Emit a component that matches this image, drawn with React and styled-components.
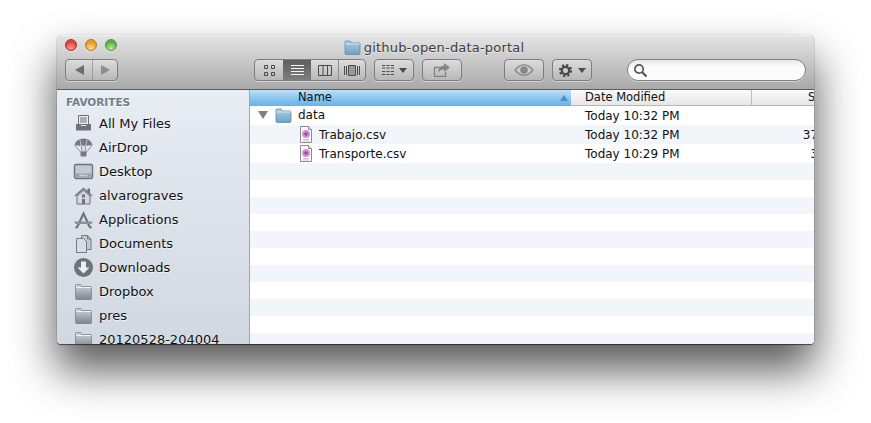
import React from "react";
import styled, { createGlobalStyle } from "styled-components";

const Global = createGlobalStyle`
  html, body {
    margin: 0;
    padding: 0;
    background: #fff;
    overflow: hidden;
  }
  body {
    font-family: "DejaVu Sans", "Liberation Sans", sans-serif;
    font-size: 12px;
    color: #111;
  }
`;

const Page = styled.div`
  width: 871px;
  height: 423px;
  padding: 35px 0 0 57px;
  box-sizing: border-box;
`;

const Win = styled.div`
  width: 757px;
  height: 309px;
  display: flex;
  flex-direction: column;
  border-radius: 5px 5px 4px 4px;
  overflow: hidden;
  box-shadow: 0 25px 44px 1px rgba(0, 0, 0, 0.66), 0 1px 1px rgba(0, 0, 0, 0.55),
    0 0 1px rgba(0, 0, 0, 0.5);
`;

const Chrome = styled.div`
  height: 55px;
  flex: none;
  box-sizing: border-box;
  background: linear-gradient(#e4e4e4, #d2d2d2 30%, #a9a9a9);
  border-top: 1px solid #f0f0f0;
  border-bottom: 1px solid #5c5c5c;
  display: flex;
  flex-direction: column;
`;

const TitleBar = styled.div`
  height: 23px;
  flex: none;
  display: flex;
  align-items: center;
  position: relative;
  justify-content: center;
  gap: 3px;
  padding-right: 3px;
  font-size: 13px;
  color: #3c3c3c;
  letter-spacing: 0.2px;
  text-shadow: 0 1px 0 rgba(255, 255, 255, 0.55);
`;

const Lights = styled.div`
  position: absolute;
  left: 8px;
  top: 3px;
  display: flex;
  gap: 8px;
`;

const Light = styled.span`
  width: 12px;
  height: 12px;
  border-radius: 50%;
  border: 1px solid ${(p) => p.$edge};
  box-sizing: border-box;
  background: radial-gradient(circle at 50% 85%, ${(p) => p.$glow}, ${(p) => p.$color} 65%);
  box-shadow: 0 1px 0 rgba(255, 255, 255, 0.4);
`;

const Toolbar = styled.div`
  display: flex;
  align-items: flex-start;
  padding-left: 8px;
`;

const Group = styled.div`
  display: flex;
  height: 22px;
  box-sizing: border-box;
  margin-left: ${(p) => p.$gap || 0}px;
  border: 1px solid #7e7e7e;
  border-radius: 4px;
  overflow: hidden;
  background: linear-gradient(#dcdcdc, #b8b8b8);
  box-shadow: 0 1px 0 rgba(255, 255, 255, 0.45);
`;

const Btn = styled.div`
  width: ${(p) => p.$w}px;
  flex: none;
  display: flex;
  align-items: center;
  justify-content: center;
  gap: 5px;
  box-sizing: border-box;
  border-left: ${(p) => (p.$first ? "none" : "1px solid #8e8e8e")};
  background: ${(p) => (p.$on ? "linear-gradient(#5e5e5e, #7e7e7e)" : "none")};
  opacity: ${(p) => (p.$dim ? 0.72 : 1)};
`;

const Search = styled.div`
  margin-left: 35px;
  width: 179px;
  height: 22px;
  box-sizing: border-box;
  border: 1px solid #808080;
  border-radius: 11px;
  background: linear-gradient(#e8e8e8, #fbfbfb 35%, #fdfdfd);
  box-shadow: 0 1px 0 rgba(255, 255, 255, 0.45);
  display: flex;
  align-items: center;
  padding-left: 5px;
`;

const Body = styled.div`
  flex: 1;
  min-height: 0;
  display: flex;
`;

const Sidebar = styled.div`
  width: 192px;
  flex: none;
  box-sizing: border-box;
  overflow: hidden;
  background: linear-gradient(#e8ecf3, #d0d8e1);
  padding-left: 9px;
`;

const SideHead = styled.div`
  height: 21px;
  padding-top: 2px;
  box-sizing: border-box;
  display: flex;
  align-items: center;
  font-size: 10.5px;
  font-weight: bold;
  color: #6f7e8e;
  text-shadow: 0 1px 0 #fff;
`;

const SideRow = styled.div`
  height: 24px;
  display: flex;
  align-items: center;
  gap: 5px;
  padding-left: 7px;
  font-size: 13px;
  color: #111;
  text-shadow: 0 1px 0 rgba(255, 255, 255, 0.7);
  white-space: nowrap;
`;

const SideIcon = styled.svg`
  width: 21px;
  height: 21px;
  flex: none;
`;

const Divider = styled.div`
  width: 1px;
  flex: none;
  background: #a4a4a4;
`;

const Main = styled.div`
  flex: 1;
  min-width: 0;
  overflow: hidden;
  background: #fff;
`;

const columns = "321px 181px 86px";

const Head = styled.div`
  height: 16px;
  display: grid;
  grid-template-columns: ${columns};
  font-size: 11.5px;
  line-height: 15px;
`;

const HeadCell = styled.div`
  box-sizing: border-box;
  position: relative;
  padding-left: ${(p) => p.$pad}px;
  background: ${(p) =>
    p.$sorted
      ? "linear-gradient(#bfe0f7, #8fc8f0 50%, #6db3ea)"
      : "linear-gradient(#fbfbfb, #e6e6e6)"};
  border-bottom: 1px solid ${(p) => (p.$sorted ? "#78aedb" : "#b8b8b8")};
  border-right: ${(p) => (p.$line ? "1px solid #bdbdbd" : "none")};
  white-space: nowrap;
`;

const SortMark = styled.span`
  position: absolute;
  right: 3px;
  top: 5px;
  width: 0;
  height: 0;
  border-left: 4px solid transparent;
  border-right: 4px solid transparent;
  border-bottom: 6px solid #4c8fc6;
`;

const Row = styled.div`
  height: ${(p) => p.$h}px;
  display: grid;
  grid-template-columns: ${columns};
  align-items: center;
  background: ${(p) => (p.$alt ? "#f2f5fa" : "#fff")};
  white-space: nowrap;
`;

const NameCell = styled.div`
  display: flex;
  align-items: center;
  padding-left: ${(p) => p.$indent}px;
`;

const DateCell = styled.div`
  padding-left: 14px;
`;

const SizeCell = styled.div`
  text-align: right;
`;

const Triangle = styled.span`
  width: 0;
  height: 0;
  margin-right: 7px;
  border-left: 5px solid transparent;
  border-right: 5px solid transparent;
  border-top: 8px solid #808080;
`;

const RowIcon = styled.svg`
  flex: none;
  margin-right: ${(p) => p.$gap}px;
`;

const ic = "#4a4a4a";

const FolderBlue = ({ size = 17, gap = 6 }) => (
  <RowIcon $gap={gap} width={size} height={size * 0.88} viewBox="0 0 17 15">
    <defs>
      <linearGradient id="fb" x1="0" y1="0" x2="0" y2="1">
        <stop offset="0" stopColor="#a9cfe6" />
        <stop offset="1" stopColor="#6ea2c4" />
      </linearGradient>
    </defs>
    <path d="M1 3.5V2a1 1 0 0 1 1-1h4l1.5 2H15a1 1 0 0 1 1 1v9.5a1 1 0 0 1-1 1H2a1 1 0 0 1-1-1z" fill="url(#fb)" stroke="#5f8ba8" strokeWidth="0.8" />
    <path d="M1.5 4h14" stroke="#d5e8f4" strokeWidth="1" />
  </RowIcon>
);

const CsvFile = () => (
  <RowIcon $gap={7} width="12" height="17" viewBox="0 0 12 17">
    <path d="M.5.5h8l3 3v13H.5z" fill="#fff" stroke="#8c8c8c" />
    <path d="M8.5.5v3h3" fill="#e4e4e4" stroke="#8c8c8c" />
    <circle cx="6" cy="8" r="4" fill="#d88ad8" />
    <circle cx="6" cy="8" r="1.8" fill="#a8429f" />
    <path d="M3 13.5h6M3 15h6" stroke="#c4c4c4" />
  </RowIcon>
);

const Tray = () => (
  <SideIcon viewBox="0 0 21 21">
    <path d="M5.5 2.5h10v9h-10z" fill="#eef0f3" stroke="#6b7179" />
    <path d="M7 5h7M7 7h7M7 9h7" stroke="#6b7179" />
    <path d="M3 11h4l1 2h5l1-2h4v6.5H3z" fill="#6d737b" />
  </SideIcon>
);

const Chute = () => (
  <SideIcon viewBox="0 0 21 21">
    <path d="M1.500 9C1.500 4.500 6 1.500 10.500 1.500S19.500 4.500 19.500 9c-1.500-1-3.500-1-5 0-1.200-1-2.800-1-4 0-1.200-1-2.800-1-4 0-1.500-1-3.500-1-5 0z" fill="#737a83" />
    <path d="M7 2.500l1 6.500M14 2.500l-1 6.500" stroke="#c6ccd4" strokeWidth="0.8" fill="none" />
    <path d="M2.500 9l5.500 6.500M18.500 9L13 15.500M8.500 9l.5 6M12.500 9l-.5 6" stroke="#737a83" strokeWidth="0.8" fill="none" />
    <rect x="7.500" y="14.500" width="6" height="5" rx="1" fill="#737a83" />
  </SideIcon>
);

const Screen = () => (
  <SideIcon viewBox="0 0 21 21">
    <rect x="1.500" y="3.500" width="18" height="14" rx="1.500" fill="#c3c9d1" stroke="#6d737b" strokeWidth="1.400" />
    <path d="M2.500 12.500h16v4h-16z" fill="#9aa1aa" />
    <path d="M6.500 14.500h8" stroke="#eef0f3" strokeWidth="1.500" strokeDasharray="1.200 .7" />
  </SideIcon>
);

const Home = () => (
  <SideIcon viewBox="0 0 21 21">
    <path d="M1.500 10.500L10.500 2.500l4 3.500V3.500h2.500v4.800l2.500 2.200-1 1-8-7-8 7z" fill="#6d737b" />
    <path d="M4 11l6.500-5.500L17 11v8H4z" fill="#d6dae0" stroke="#6d737b" />
    <rect x="9" y="9.500" width="3" height="3" fill="#6d737b" />
    <rect x="9" y="14" width="3" height="5" fill="#6d737b" />
  </SideIcon>
);

const AppsIcon = () => (
  <SideIcon viewBox="0 0 21 21">
    <path d="M10.500 2L3 18h2.500l5-11 5 11H18z" fill="#6d737b" />
    <path d="M1 12.500h19l-1.500 2.500h-16z" fill="#8d939b" />
    <path d="M2 18.500h3M16 18.500h3" stroke="#6d737b" strokeWidth="1.500" />
  </SideIcon>
);

const Docs = () => (
  <SideIcon viewBox="0 0 21 21">
    <path d="M3.500 5.500h7l3 3v11h-10z" fill="#d9dde3" stroke="#737a83" />
    <path d="M8.500 2.500h6l3.500 3.500v10.500h-4.500v-8l-3-3h-2z" fill="#c4cad2" stroke="#737a83" />
    <path d="M14.500 2.500v3.500h3.500" fill="none" stroke="#737a83" />
  </SideIcon>
);

const Down = () => (
  <SideIcon viewBox="0 0 21 21">
    <circle cx="10.500" cy="10.500" r="9.500" fill="#6d737b" />
    <path d="M8 4.500h5v6h3.500l-6 6-6-6H8z" fill="#eef0f3" />
  </SideIcon>
);

const Folder = () => (
  <SideIcon viewBox="0 0 21 21">
    <defs>
      <linearGradient id="fg" x1="0" y1="0" x2="0" y2="1">
        <stop offset="0" stopColor="#d0d5db" />
        <stop offset="1" stopColor="#7d848d" />
      </linearGradient>
    </defs>
    <path d="M2.500 6V4.500a1 1 0 0 1 1-1h4l1.500 2h8.500a1 1 0 0 1 1 1v11a1 1 0 0 1-1 1h-14a1 1 0 0 1-1-1z" fill="url(#fg)" stroke="#7a8189" strokeWidth="0.8" />
    <path d="M3 6.500h15" stroke="#eef0f3" />
  </SideIcon>
);

const favorites = [
  ["All My Files", Tray],
  ["AirDrop", Chute],
  ["Desktop", Screen],
  ["alvarograves", Home],
  ["Applications", AppsIcon],
  ["Documents", Docs],
  ["Downloads", Down],
  ["Dropbox", Folder],
  ["pres", Folder],
  ["20120528-204004", Folder],
];

const Caret = () => (
  <svg width="8" height="5" viewBox="0 0 8 5">
    <path d="M0 0h8L4 5z" fill={ic} />
  </svg>
);

export default function App() {
  const blanks = Array.from({ length: 11 });
  return (
    <Page>
      <Global />
      <Win>
        <Chrome>
          <TitleBar>
            <Lights>
              <Light $color="#e0433f" $glow="#ff9f97" $edge="#9c3431" />
              <Light $color="#e69a27" $glow="#ffdf8f" $edge="#a87a2f" />
              <Light $color="#5fae3d" $glow="#bdf0a0" $edge="#5d8c48" />
            </Lights>
            <FolderBlue size={17} gap={0} />
            <span>github-open-data-portal</span>
          </TitleBar>
          <Toolbar>
            <Group>
              <Btn $w={26} $first $dim>
                <svg width="9" height="10" viewBox="0 0 9 10"><path d="M9 0v10L0 5z" fill={ic} /></svg>
              </Btn>
              <Btn $w={25} $dim>
                <svg width="9" height="10" viewBox="0 0 9 10"><path d="M0 0v10l9-5z" fill="#777" /></svg>
              </Btn>
            </Group>
            <Group $gap={136}>
              <Btn $w={28} $first>
                <svg width="11" height="11" viewBox="0 0 11 11">
                  <path d="M.5.500h3v3h-3zM7.500.500h3v3h-3zM.5 7.500h3v3h-3zM7.500 7.500h3v3h-3z" fill="none" stroke={ic} />
                </svg>
              </Btn>
              <Btn $w={28} $first $on>
                <svg width="13" height="11" viewBox="0 0 13 11">
                  <path d="M0 .5h13M0 3.500h13M0 6.500h13M0 9.500h13" stroke="#f4f4f4" />
                </svg>
              </Btn>
              <Btn $w={27} $first>
                <svg width="14" height="11" viewBox="0 0 14 11">
                  <path d="M.5.500h13v10H.5zM5 .5v10M9.500.5v10" fill="none" stroke={ic} />
                </svg>
              </Btn>
              <Btn $w={27}>
                <svg width="16" height="11" viewBox="0 0 16 11">
                  <path d="M.5 1v9M2.500 1v9M13.500 1v9M15.500 1v9" stroke={ic} />
                  <path d="M4.500.500h7v10h-7z" fill="#999" stroke={ic} />
                </svg>
              </Btn>
            </Group>
            <Group $gap={8}>
              <Btn $w={38} $first>
                <svg width="12" height="10" viewBox="0 0 12 10">
                  <path d="M0 .5h12M0 6.500h12M0 3h12M0 9.500h12" stroke={ic} strokeDasharray="3.200 1.200" />
                </svg>
                <Caret />
              </Btn>
            </Group>
            <Group $gap={8}>
              <Btn $w={38} $first $dim>
                <svg width="18" height="14" viewBox="0 0 18 14">
                  <path d="M10 4.500H1.500v9h11V9" fill="none" stroke="#6a6a6a" strokeWidth="1.300" />
                  <path d="M11 0l6 4.500-6 4.500V6.500C8 6.500 6 8 5 10c0-4 2.500-7 6-7.500z" fill="#6a6a6a" />
                </svg>
              </Btn>
            </Group>
            <Group $gap={42}>
              <Btn $w={38} $first $dim>
                <svg width="20" height="12" viewBox="0 0 20 12">
                  <path d="M0 6c3-4 6.500-6 10-6s7 2 10 6c-3 4-6.500 6-10 6S3 10 0 6z" fill="#7d7d7d" />
                  <path d="M2.500 6C5 3 7.500 1.500 10 1.500S15 3 17.500 6C15 9 12.500 10.500 10 10.500S5 9 2.500 6z" fill="#d2d2d2" />
                  <circle cx="10" cy="6" r="3.800" fill="#6e6e6e" />
                </svg>
              </Btn>
            </Group>
            <Group $gap={8}>
              <Btn $w={38} $first>
                <svg width="15" height="15" viewBox="0 0 15 15">
                  <circle cx="7.500" cy="7.500" r="5.300" fill="none" stroke={ic} strokeWidth="2.600" strokeDasharray="2.100 2.060" />
                  <circle cx="7.500" cy="7.500" r="3.700" fill="none" stroke={ic} strokeWidth="2.300" />
                </svg>
                <Caret />
              </Btn>
            </Group>
            <Search>
              <svg width="15" height="15" viewBox="0 0 15 15">
                <circle cx="6" cy="6" r="4.200" fill="none" stroke="#555" strokeWidth="1.700" />
                <path d="M9.200 9.200l4.300 4.300" stroke="#555" strokeWidth="2.200" />
              </svg>
            </Search>
          </Toolbar>
        </Chrome>
        <Body>
          <Sidebar>
            <SideHead>FAVORITES</SideHead>
            {favorites.map(([label, Icon]) => (
              <SideRow key={label}>
                <Icon />
                {label}
              </SideRow>
            ))}
          </Sidebar>
          <Divider />
          <Main>
            <Head>
              <HeadCell $sorted $pad={48}>
                Name
                <SortMark />
              </HeadCell>
              <HeadCell $pad={14} $line>Date Modified</HeadCell>
              <HeadCell $pad={56}>Size</HeadCell>
            </Head>
            <Row $h={19}>
              <NameCell $indent={8}>
                <Triangle />
                <FolderBlue />
                data
              </NameCell>
              <DateCell>Today 10:32 PM</DateCell>
              <SizeCell />
            </Row>
            <Row $h={19} $alt>
              <NameCell $indent={50}>
                <CsvFile />
                Trabajo.csv
              </NameCell>
              <DateCell>Today 10:32 PM</DateCell>
              <SizeCell>37 KB</SizeCell>
            </Row>
            <Row $h={19}>
              <NameCell $indent={50}>
                <CsvFile />
                Transporte.csv
              </NameCell>
              <DateCell>Today 10:29 PM</DateCell>
              <SizeCell>3 KB</SizeCell>
            </Row>
            {blanks.map((_, i) => (
              <Row key={i} $h={17} $alt={i % 2 === 0} />
            ))}
          </Main>
        </Body>
      </Win>
    </Page>
  );
}
